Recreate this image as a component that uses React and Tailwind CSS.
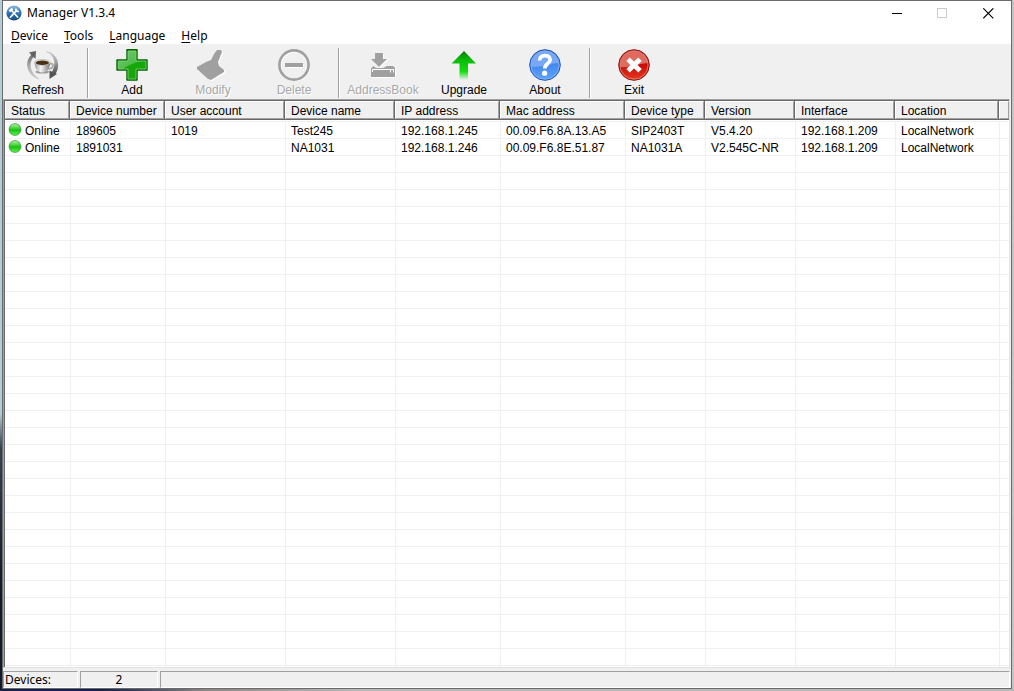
import React from 'react';

const LogoIcon = () => (
  <svg width="16" height="16" viewBox="0 0 16 16" aria-hidden="true">
    <defs>
      <linearGradient id="logo" x1="0" y1="0" x2="0" y2="1">
        <stop offset="0" stopColor="#8fbce0" />
        <stop offset="0.5" stopColor="#2f74b4" />
        <stop offset="1" stopColor="#174a82" />
      </linearGradient>
    </defs>
    <circle cx="8" cy="8" r="7.6" fill="url(#logo)" />
    <path d="M4.4 12.2 L10.6 5.4 M11.6 12 L5.4 5.2" stroke="#fff" strokeWidth="1.7" strokeLinecap="round" />
    <path d="M3.4 6.4 L6.6 3.6" stroke="#fff" strokeWidth="2.2" />
    <path d="M9.6 3.6 L10.4 6 L12.8 6.6" fill="none" stroke="#fff" strokeWidth="1.6" />
  </svg>
);

const RefreshIcon = () => (
  <svg width="32" height="32" viewBox="0 0 32 32" aria-hidden="true">
    <defs>
      <linearGradient id="ringLeft" x1="0" y1="0" x2="0" y2="1">
        <stop offset="0" stopColor="#6a6a6a" />
        <stop offset="0.5" stopColor="#b0b0b0" />
        <stop offset="1" stopColor="#cfcfcf" />
      </linearGradient>
      <linearGradient id="ringRight" x1="0" y1="0" x2="0" y2="1">
        <stop offset="0" stopColor="#cfcfcf" />
        <stop offset="0.5" stopColor="#a0a0a0" />
        <stop offset="1" stopColor="#4c4c4c" />
      </linearGradient>
      <linearGradient id="cup" x1="0" y1="0" x2="1" y2="0">
        <stop offset="0" stopColor="#999" />
        <stop offset="0.4" stopColor="#f5f5f5" />
        <stop offset="1" stopColor="#777" />
      </linearGradient>
    </defs>
    <path d="M12 30.5 C0 27 -4 13 5 5 L7 7.5 C1 14 3 24 12 29.5 Z" fill="url(#ringLeft)" />
    <path d="M2 3.5 L9 2 L8.5 10 Z" fill="#606060" />
    <path d="M19 2 C30 4 34.5 15 28.5 25 L25 23 C29.5 15 27.5 6 19 2.8 Z" fill="url(#ringRight)" />
    <path d="M22.5 21.5 L30 25 L22.5 30 Z" fill="#555" />
    <path d="M22 15 C27.5 13 27.5 19.5 21 20" fill="none" stroke="#a5a5a5" strokeWidth="1.7" />
    <ellipse cx="15.3" cy="23" rx="7" ry="1.6" fill="#9a9a9a" />
    <path d="M7.5 13.5 C8 19 10 23.5 15.3 23.5 C20.6 23.5 22.8 19 23.2 13.5 Z" fill="url(#cup)" />
    <ellipse cx="15.3" cy="13.4" rx="8" ry="2.9" fill="#e8e8e8" stroke="#999" strokeWidth="0.5" />
    <ellipse cx="15.3" cy="13.8" rx="6.8" ry="2.2" fill="#4a2f14" />
  </svg>
);

const AddIcon = () => (
  <svg width="32" height="32" viewBox="0 0 32 32" aria-hidden="true">
    <defs>
      <linearGradient id="plus" x1="0" y1="0" x2="1" y2="1">
        <stop offset="0" stopColor="#6fce6c" />
        <stop offset="1" stopColor="#43b13d" />
      </linearGradient>
    </defs>
    <path d="M11 .8 H21 V11 H31 V21 H21 V31 H11 V21 H1 V11 H11 Z" fill="#16a70b" stroke="#075c05" strokeWidth="1.4" strokeLinejoin="round" />
    <path d="M12 2 H20 V12 H26 C20 13 12 16 7 20 H2.2 V12 H12 Z" fill="url(#plus)" />
    <path d="M12 2 H20 V12 H30 V20 H20 V30 H12 V20 H2.2 V12 H12 Z" fill="none" stroke="#7fd678" strokeWidth="0.8" />
  </svg>
);

const ModifyIcon = () => (
  <svg width="32" height="32" viewBox="0 0 32 32" aria-hidden="true">
    <path d="M20 1 H24 L25 3 L21 13 L22 17 L27 21 V23 L14 31 L11 30 L0 20 V18 L9 13 L14 11 L17 5 Z" fill="#fff" transform="translate(1 1)" />
    <path d="M20 1 H24 L25 3 L21 13 L22 17 L27 21 V23 L14 31 L11 30 L0 20 V18 L9 13 L14 11 L17 5 Z" fill="#a0a0a0" />
  </svg>
);

const DeleteIcon = () => (
  <svg width="32" height="32" viewBox="0 0 32 32" aria-hidden="true">
    <circle cx="16.8" cy="16.8" r="14.4" fill="none" stroke="#fff" strokeWidth="2.4" />
    <circle cx="16" cy="16" r="14.6" fill="none" stroke="#a0a0a0" strokeWidth="2.6" />
    <rect x="8" y="15" width="18" height="4" fill="#fff" />
    <rect x="7" y="14" width="18" height="4" fill="#a0a0a0" />
  </svg>
);

const AddressBookIcon = () => (
  <svg width="32" height="32" viewBox="0 0 32 32" aria-hidden="true">
    <path d="M5 19 H29 V29 H5 Z" fill="#fff" />
    <path d="M4 20 L6 17 H26 L28 19 V28 H4 Z" fill="#a0a0a0" />
    <path d="M6 17 L12.5 21 L20 17 Z" fill="#f0f0f0" />
    <path d="M4 19 H28 V28 H4 Z" fill="#a0a0a0" />
    <path d="M5.5 23 V20.5 H26.5 V23.5 M23.5 20.5 V23.5" fill="none" stroke="#fff" />
    <path d="M9 5 H17 V11 H21 L13 19 L5 11 H9 Z" fill="#fff" />
    <path d="M8 4 H16 V10 H20 L12 18 L4 10 H8 Z" fill="#a0a0a0" />
  </svg>
);

const UpgradeIcon = () => (
  <svg width="32" height="32" viewBox="0 0 32 32" aria-hidden="true">
    <defs>
      <linearGradient id="up" x1="0" y1="0" x2="0" y2="1">
        <stop offset="0" stopColor="#067c06" />
        <stop offset="0.3" stopColor="#0cb90c" />
        <stop offset="0.7" stopColor="#11dc0b" />
        <stop offset="1" stopColor="#11dc0b" stopOpacity="0" />
      </linearGradient>
    </defs>
    <path d="M16 2 L28 14.5 H20 V31 H11.5 V14.5 H3.5 Z" fill="url(#up)" />
  </svg>
);

const AboutIcon = () => (
  <svg width="32" height="32" viewBox="0 0 32 32" aria-hidden="true">
    <defs>
      <linearGradient id="about" x1="0" y1="0" x2="0" y2="1">
        <stop offset="0" stopColor="#2f6fe0" />
        <stop offset="1" stopColor="#5ba4ff" />
      </linearGradient>
    </defs>
    <circle cx="16" cy="16" r="15.3" fill="url(#about)" stroke="#2453a8" strokeWidth="1" />
    <path d="M2.2 17.5 A13.8 13.8 0 0 1 29.8 14 C22 14 12 19 2.2 17.5 Z" fill="#78a8f4" />
    <circle cx="16" cy="16" r="14.1" fill="none" stroke="#8ab8fa" strokeWidth="0.8" />
    <path d="M10.5 11.5 C10.5 5 21.5 5.2 21.2 11 C21 14.6 15.8 14.4 15.8 19.5" fill="none" stroke="#fff" strokeWidth="3.8" />
    <circle cx="15.6" cy="24.2" r="2.6" fill="#fff" />
  </svg>
);

const ExitIcon = () => (
  <svg width="32" height="32" viewBox="0 0 32 32" aria-hidden="true">
    <defs>
      <linearGradient id="exit" x1="0" y1="0" x2="0" y2="1">
        <stop offset="0" stopColor="#d03030" />
        <stop offset="0.5" stopColor="#c90c06" />
        <stop offset="1" stopColor="#e83a20" />
      </linearGradient>
    </defs>
    <circle cx="16" cy="16" r="15.3" fill="url(#exit)" stroke="#7c1a14" strokeWidth="1" />
    <path d="M2.2 18 A13.8 13.8 0 0 1 29.8 14 C22 14 12 19 2.2 18 Z" fill="#e06a60" />
    <circle cx="16" cy="16" r="14.1" fill="none" stroke="#e58a7e" strokeWidth="0.8" />
    <path d="M10 10.2 L22 21.8 M22 10.2 L10 21.8" stroke="#fff" strokeWidth="5" />
  </svg>
);

const StatusIcon = () => (
  <svg width="14" height="14" viewBox="0 0 14 14" className="shrink-0" aria-hidden="true">
    <defs>
      <linearGradient id="lamp" x1="0" y1="0" x2="0" y2="1">
        <stop offset="0" stopColor="#b8f5b0" />
        <stop offset="0.35" stopColor="#4fd645" />
        <stop offset="0.55" stopColor="#1cc015" />
        <stop offset="1" stopColor="#5cf94e" />
      </linearGradient>
    </defs>
    <circle cx="7" cy="7.5" r="5.9" fill="url(#lamp)" stroke="#2a8f28" strokeWidth="0.7" />
  </svg>
);

const menus = ['Device', 'Tools', 'Language', 'Help'];

// each inner list is one group, groups are split by a separator
const toolGroups = [
  [{ name: 'Refresh', icon: RefreshIcon }],
  [
    { name: 'Add', icon: AddIcon },
    { name: 'Modify', icon: ModifyIcon, disabled: true },
    { name: 'Delete', icon: DeleteIcon, disabled: true },
  ],
  [
    { name: 'AddressBook', icon: AddressBookIcon, disabled: true },
    { name: 'Upgrade', icon: UpgradeIcon },
    { name: 'About', icon: AboutIcon },
  ],
  [{ name: 'Exit', icon: ExitIcon }],
];

const columns = [
  { key: 'status', name: 'Status', width: 'w-[65px]' },
  { key: 'number', name: 'Device number', width: 'w-[95px]' },
  { key: 'account', name: 'User account', width: 'w-[120px]' },
  { key: 'name', name: 'Device name', width: 'w-[110px]' },
  { key: 'ip', name: 'IP address', width: 'w-[105px]' },
  { key: 'mac', name: 'Mac address', width: 'w-[125px]' },
  { key: 'type', name: 'Device type', width: 'w-[80px]' },
  { key: 'version', name: 'Version', width: 'w-[90px]' },
  { key: 'iface', name: 'Interface', width: 'w-[100px]' },
  { key: 'location', name: 'Location', width: 'w-[104px]' },
  { key: 'rest', name: '', width: 'w-auto' },
];

const devices = [
  {
    status: 'Online', number: '189605', account: '1019', name: 'Test245', ip: '192.168.1.245',
    mac: '00.09.F6.8A.13.A5', type: 'SIP2403T', version: 'V5.4.20', iface: '192.168.1.209', location: 'LocalNetwork',
  },
  {
    status: 'Online', number: '1891031', account: '', name: 'NA1031', ip: '192.168.1.246',
    mac: '00.09.F6.8E.51.87', type: 'NA1031A', version: 'V2.545C-NR', iface: '192.168.1.209', location: 'LocalNetwork',
  },
];

// empty grid rows go on past the bottom edge of the list
const rows = [...devices, ...Array.from({ length: 60 }, () => ({}))];

const TitleBar = () => (
  <header className="flex h-6 shrink-0 items-center justify-between bg-white pl-[3px]">
    <div className="flex items-center gap-[5px]">
      <LogoIcon />
      <h1 className="text-[12px] leading-4">Manager V1.3.4</h1>
    </div>
    <div className="flex h-full">
      <button type="button" aria-label="Minimize" className="flex w-[45px] items-center justify-center">
        <svg width="11" height="11" viewBox="0 0 11 11"><path d="M0 5.5 H10" stroke="#000" /></svg>
      </button>
      <button type="button" aria-label="Maximize" disabled className="flex w-[45px] items-center justify-center">
        <svg width="11" height="11" viewBox="0 0 11 11"><rect x="0.5" y="0.5" width="9" height="9" fill="none" stroke="#ccc" /></svg>
      </button>
      <button type="button" aria-label="Close" className="flex w-[46px] items-center justify-center">
        <svg width="11" height="11" viewBox="0 0 11 11"><path d="M0.3 0.3 L10.3 10.3 M10.3 0.3 L0.3 10.3" stroke="#000" strokeWidth="1.1" /></svg>
      </button>
    </div>
  </header>
);

const MenuBar = () => (
  <nav className="flex h-[19px] shrink-0 items-center bg-white pt-0.5">
    {menus.map((menu) => (
      <button type="button" key={menu} className="px-2 text-[12px] leading-4">
        <span className="underline underline-offset-2">{menu[0]}</span>{menu.slice(1)}
      </button>
    ))}
  </nav>
);

const ToolBar = () => (
  <div className="flex h-[55px] shrink-0 pt-1 font-['Liberation_Sans',Arial,sans-serif]">
    {toolGroups.map((group, index) => (
      <React.Fragment key={group[0].name}>
        {index > 0 && (
          <div className="flex w-2 justify-center pb-px">
            <div className="w-[2px] border-l border-r border-l-[#a0a0a0] border-r-white" />
          </div>
        )}
        {group.map((tool) => (
          <button
            type="button"
            key={tool.name}
            disabled={tool.disabled}
            className="flex w-[81px] flex-col items-center pt-px pr-px text-[12px] leading-[18px] disabled:text-[#a8a8a8] disabled:[text-shadow:1px_1px_0_#fff]"
          >
            <tool.icon />
            {tool.name}
          </button>
        ))}
      </React.Fragment>
    ))}
  </div>
);

const DeviceTable = () => (
  <main className="mr-px min-h-0 flex-1 overflow-hidden border border-t-[#a0a0a0] border-r-[#e3e3e3] border-b-[#e3e3e3] border-l-[#a0a0a0]">
    <div className="h-full overflow-hidden border-t border-l border-[#696969] bg-white">
      <table className="w-full table-fixed border-separate border-spacing-0 font-['Liberation_Sans',Arial,sans-serif] text-[12px] leading-[14px]">
        <colgroup>
          {columns.map((col) => <col key={col.key} className={col.width} />)}
        </colgroup>
        <thead>
          <tr>
            {columns.map((col) => (
              <th key={col.key} className="h-[19px] bg-[#696969] p-0 pr-px pb-px text-left font-normal whitespace-nowrap last:pr-0">
                <div className="h-[18px] border border-t-white border-r-[#a0a0a0] border-b-[#a0a0a0] border-l-white bg-[#f0f0f0] pt-0.5 pl-[5px]">
                  {col.name}
                </div>
              </th>
            ))}
          </tr>
        </thead>
        <tbody>
          <tr aria-hidden="true">
            {columns.map((col) => <td key={col.key} className="h-[2px] border-b border-[#f0f0f0] p-0" />)}
          </tr>
          {rows.map((row, index) => (
            <tr key={index}>
              {columns.map((col, i) => (
                <td
                  key={col.key}
                  className={`h-[17px] border-b border-[#f0f0f0] p-0 align-top whitespace-nowrap ${i === 0 ? 'pl-[3px]' : 'border-l pt-0.5 pl-[5px]'}`}
                >
                  {col.key === 'status' && row.status ? (
                    <div className="flex gap-[3px]">
                      <StatusIcon />
                      <span className="pt-0.5">{row.status}</span>
                    </div>
                  ) : row[col.key]}
                </td>
              ))}
            </tr>
          ))}
        </tbody>
      </table>
    </div>
  </main>
);

const StatusBar = () => (
  <footer className="mt-[3px] mr-px flex h-[17px] shrink-0 gap-[2px] text-[12px] leading-4">
    <div className="w-[75px] border border-t-[#a0a0a0] border-r-white border-b-white border-l-[#a0a0a0] pl-px">Devices:</div>
    <div className="w-[78px] border border-t-[#a0a0a0] border-r-white border-b-white border-l-[#a0a0a0] text-center">2</div>
    <div className="flex-1 border border-t-[#a0a0a0] border-r-white border-b-white border-l-[#a0a0a0]" />
  </footer>
);

const App = () => (
  <div className="flex h-screen flex-col font-['Noto_Sans','Open_Sans',sans-serif] text-black">
    <div className="flex min-h-0 flex-1">
      {/* desktop behind the window */}
      <div className="w-0.5 bg-linear-to-b from-[#b4cbd9] from-60% via-[#33444f] via-65% to-[#101a2c] to-85%" />
      <div className="flex min-w-0 flex-1 flex-col border border-[#6b6b6b] bg-[#f0f0f0]">
        <TitleBar />
        <MenuBar />
        <ToolBar />
        <DeviceTable />
        <StatusBar />
      </div>
      <div className="w-0.5 bg-[#c4c4c4]" />
    </div>
    <div className="h-0.5 shrink-0 bg-linear-to-r from-[#16204a] from-10% via-[#8a8484] via-20% to-[#b8b8b8] to-35%" />
  </div>
);

export default App;
